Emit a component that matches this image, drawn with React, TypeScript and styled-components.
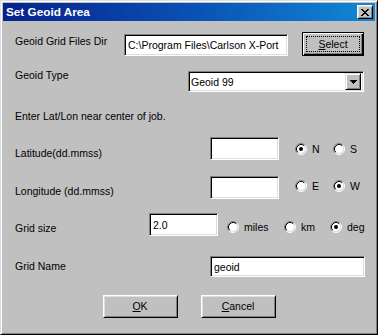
import React from "react"
import styled, { createGlobalStyle } from "styled-components"

const GlobalStyle = createGlobalStyle`
  html, body {
    margin: 0;
    padding: 0;
    background: #c0c0c0;
  }
  body {
    font-family: "Liberation Sans", Arial, sans-serif;
    font-size: 10.5px;
    color: #000;
  }
`

const Window = styled.div`
  width: 378px;
  height: 335px;
  box-sizing: border-box;
  background: #c0c0c0;
  border: 1px solid;
  border-color: #dfdfdf #000 #000 #dfdfdf;
  box-shadow: inset 1px 1px #fff, inset -1px -1px #808080;
  padding: 2px;
  display: flex;
  flex-direction: column;
`

const TitleBar = styled.div`
  height: 18px;
  display: flex;
  align-items: center;
  justify-content: space-between;
  padding: 0 2px 0 3px;
  background: linear-gradient(90deg, #06228c 0%, #0a50b4 50%, #1088d4 100%);
`

const Title = styled.div`
  color: #fff;
  font-weight: bold;
  font-size: 11.75px;
  line-height: 14px;
`

const CloseButton = styled.div`
  width: 16px;
  height: 14px;
  box-sizing: border-box;
  background: #c0c0c0;
  border: 1px solid;
  border-color: #fff #000 #000 #fff;
  box-shadow: inset 1px 1px #dfdfdf, inset -1px -1px #808080;
  display: flex;
  align-items: center;
  justify-content: center;
`

const Form = styled.div`
  display: flex;
  flex-direction: column;
`

const Row = styled.div<{ $gap: number }>`
  display: flex;
  align-items: flex-start;
  padding-left: 12px;
  margin-top: ${p => p.$gap}px;
`

const Label = styled.div<{ $width?: number; $offset?: number }>`
  width: ${p => (p.$width ? `${p.$width}px` : "auto")};
  flex-shrink: 0;
  margin-top: ${p => p.$offset || 0}px;
  line-height: 13px;
  white-space: nowrap;
`

const TextField = styled.div<{ $width: number; $height: number; $offset?: number }>`
  width: ${p => p.$width}px;
  height: ${p => p.$height}px;
  margin-top: ${p => p.$offset || 0}px;
  box-sizing: border-box;
  flex-shrink: 0;
  background: #fff;
  border: 1px solid;
  border-color: #808080 #fff #fff #808080;
  box-shadow: inset 1px 1px #000, inset -1px -1px #dfdfdf;
  padding: 0 2px 0 3px;
  display: flex;
  align-items: center;
  white-space: nowrap;
  overflow: hidden;
`

const ComboBox = styled(TextField)`
  padding: 0 2px 0 2px;
  justify-content: space-between;
`

const DropButton = styled.div`
  width: 16px;
  height: 17px;
  box-sizing: border-box;
  background: #c0c0c0;
  border: 1px solid;
  border-color: #dfdfdf #000 #000 #dfdfdf;
  box-shadow: inset 1px 1px #fff, inset -1px -1px #808080;
  display: flex;
  align-items: center;
  justify-content: center;
`

const Button = styled.div<{ $width: number; $height: number; $default?: boolean }>`
  width: ${p => p.$width}px;
  height: ${p => p.$height}px;
  box-sizing: border-box;
  flex-shrink: 0;
  background: #c0c0c0;
  border: 1px solid;
  border-color: ${p => (p.$default ? "#000" : "#fff #000 #000 #fff")};
  box-shadow: ${p =>
    p.$default
      ? "inset 1px 1px #fff, inset -1px -1px #000, inset -2px -2px #808080"
      : "inset 1px 1px #dfdfdf, inset -1px -1px #808080"};
  display: flex;
  align-items: center;
  justify-content: center;
  line-height: 13px;
  position: relative;
  ${p =>
    p.$default &&
    `
    outline: 1px dotted #000;
    outline-offset: -5px;
  `}
`

const RadioGroup = styled.div<{ $left: number; $offset: number }>`
  display: flex;
  margin-left: ${p => p.$left}px;
  margin-top: ${p => p.$offset}px;
`

const RadioItem = styled.div<{ $width?: number }>`
  width: ${p => (p.$width ? `${p.$width}px` : "auto")};
  height: 12px;
  display: flex;
  align-items: center;
  gap: 5px;
  line-height: 13px;
`

const ButtonRow = styled.div`
  display: flex;
  justify-content: center;
  gap: 23px;
  margin-top: 18px;
`

const X_ROWS = ["11000011", "01100110", "00111100", "00011000", "00111100", "01100110", "11000011"]

function CloseIcon() {
  return (
    <svg width="8" height="7" viewBox="0 0 8 7" shapeRendering="crispEdges">
      {X_ROWS.map((row, y) =>
        row.split("").map((c, x) => (c === "1" ? <rect key={`${x}-${y}`} x={x} y={y} width="1" height="1" fill="#000" /> : null))
      )}
    </svg>
  )
}

function ArrowIcon() {
  return (
    <svg width="7" height="4" viewBox="0 0 7 4" shapeRendering="crispEdges">
      <rect x="0" y="0" width="7" height="1" fill="#000" />
      <rect x="1" y="1" width="5" height="1" fill="#000" />
      <rect x="2" y="2" width="3" height="1" fill="#000" />
      <rect x="3" y="3" width="1" height="1" fill="#000" />
    </svg>
  )
}

function RadioIcon({ checked }: { checked?: boolean }) {
  return (
    <svg width="12" height="12" viewBox="0 0 12 12">
      <circle cx="6" cy="6" r="4.5" fill="#fff" />
      <path d="M2.11 9.89 A5.5 5.5 0 0 1 9.89 2.11" fill="none" stroke="#808080" strokeWidth="1" />
      <path d="M9.89 2.11 A5.5 5.5 0 0 1 2.11 9.89" fill="none" stroke="#fff" strokeWidth="1" />
      <path d="M2.82 9.18 A4.5 4.5 0 0 1 9.18 2.82" fill="none" stroke="#000" strokeWidth="1" />
      <path d="M9.18 2.82 A4.5 4.5 0 0 1 2.82 9.18" fill="none" stroke="#dfdfdf" strokeWidth="1" />
      {checked && <circle cx="6" cy="6" r="2" fill="#000" />}
    </svg>
  )
}

function Radio({ label, checked, width }: { label: string; checked?: boolean; width?: number }) {
  return (
    <RadioItem $width={width}>
      <RadioIcon checked={checked} />
      <span>{label}</span>
    </RadioItem>
  )
}

export default function App() {
  return (
    <>
      <GlobalStyle />
      <Window>
        <TitleBar>
          <Title>Set Geoid Area</Title>
          <CloseButton>
            <CloseIcon />
          </CloseButton>
        </TitleBar>
        <Form>
          <Row $gap={11}>
            <Label $width={109} $offset={3}>Geoid Grid Files Dir</Label>
            <TextField $width={164} $height={22} $offset={2}>C:\Program Files\Carlson X-Port</TextField>
            <Button $width={62} $height={24} $default style={{ marginLeft: 14 }}>
              <span>
                <u>S</u>elect
              </span>
            </Button>
          </Row>
          <Row $gap={12}>
            <Label $width={173} $offset={1}>Geoid Type</Label>
            <ComboBox $width={176} $height={21} $offset={3}>
              <span>Geoid 99</span>
              <DropButton>
                <ArrowIcon />
              </DropButton>
            </ComboBox>
          </Row>
          <Row $gap={18}>
            <Label>Enter Lat/Lon near center of job.</Label>
          </Row>
          <Row $gap={14}>
            <Label $width={195} $offset={10}>Latitude(dd.mmss)</Label>
            <TextField $width={69} $height={23} />
            <RadioGroup $left={16} $offset={6}>
              <Radio label="N" checked width={38} />
              <Radio label="S" />
            </RadioGroup>
          </Row>
          <Row $gap={16}>
            <Label $width={195} $offset={9}>Longitude (dd.mmss)</Label>
            <TextField $width={69} $height={23} />
            <RadioGroup $left={16} $offset={4}>
              <Radio label="E" width={38} />
              <Radio label="W" checked />
            </RadioGroup>
          </Row>
          <Row $gap={14}>
            <Label $width={134} $offset={9}>Grid size</Label>
            <TextField $width={69} $height={23}>2.0</TextField>
            <RadioGroup $left={9} $offset={8}>
              <Radio label="miles" width={57} />
              <Radio label="km" width={46} />
              <Radio label="deg" checked />
            </RadioGroup>
          </Row>
          <Row $gap={20}>
            <Label $width={195} $offset={4}>Grid Name</Label>
            <TextField $width={155} $height={21}>geoid</TextField>
          </Row>
          <ButtonRow>
            <Button $width={75} $height={23}>
              <span>
                <u>O</u>K
              </span>
            </Button>
            <Button $width={75} $height={23}>
              <span>
                <u>C</u>ancel
              </span>
            </Button>
          </ButtonRow>
        </Form>
      </Window>
    </>
  )
}
